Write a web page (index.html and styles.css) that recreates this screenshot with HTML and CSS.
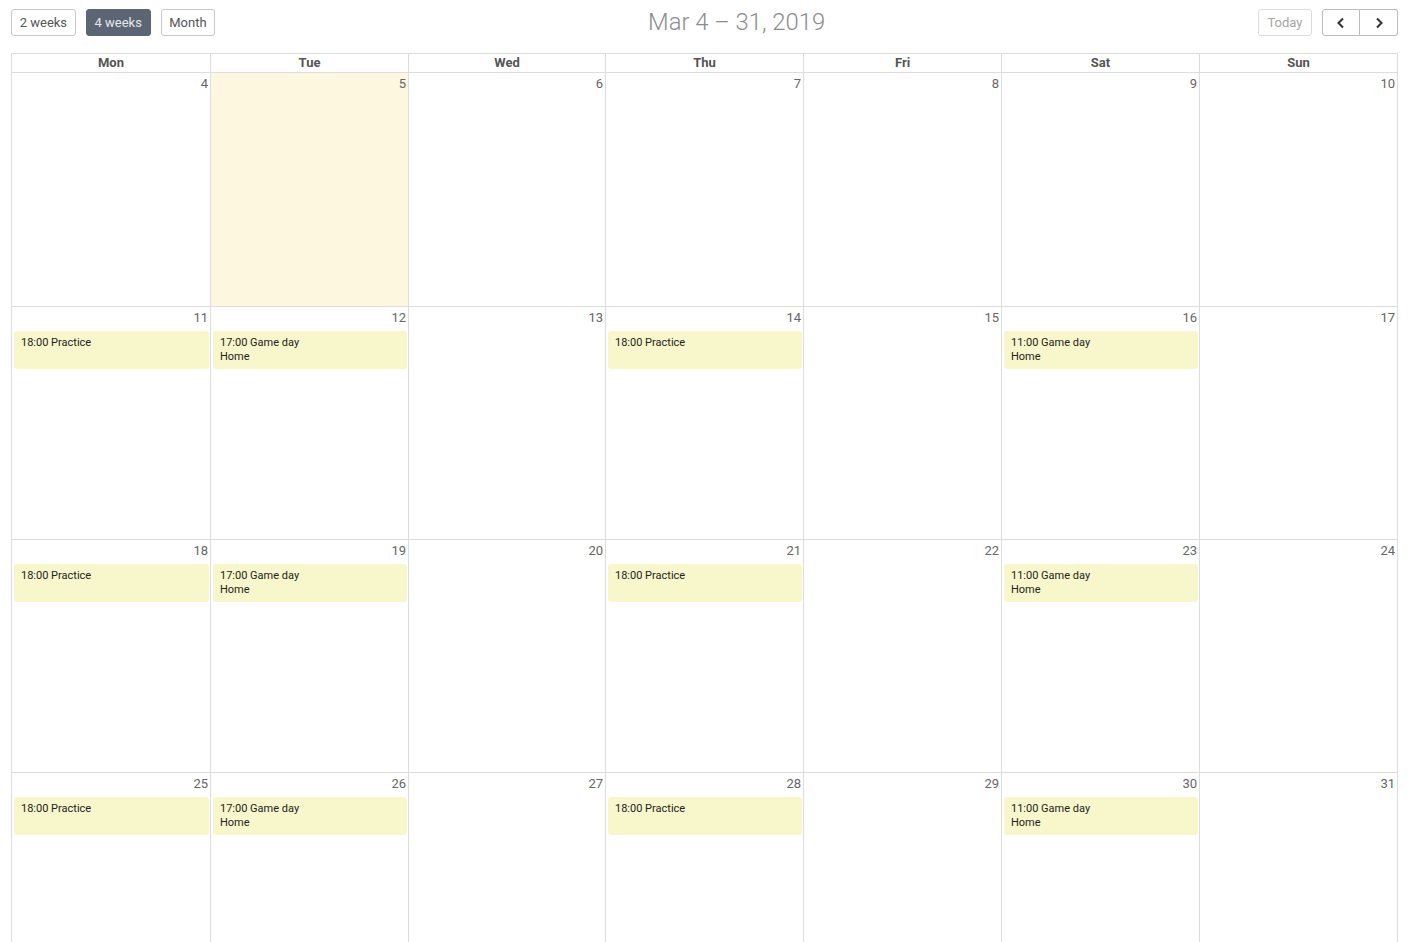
FILE: index.html
```html
<!DOCTYPE html>
<html>
<head>
<meta charset="utf-8">
<link rel="stylesheet" href="styles.css">
</head>
<body>
<div class="page">
  <div class="toolbar">
    <div class="group">
      <button class="btn">2 weeks</button>
      <button class="btn active">4 weeks</button>
      <button class="btn">Month</button>
    </div>
    <h2 class="title">Mar 4 – 31, 2019</h2>
    <div class="group right">
      <button class="btn disabled">Today</button>
      <div class="nav">
        <button class="btn nav-btn"><svg width="10" height="12" viewBox="0 0 10 12"><path d="M7 1.5 L2.5 6 L7 10.5" fill="none" stroke="#333" stroke-width="2"/></svg></button>
        <button class="btn nav-btn"><svg width="10" height="12" viewBox="0 0 10 12"><path d="M3 1.5 L7.5 6 L3 10.5" fill="none" stroke="#333" stroke-width="2"/></svg></button>
      </div>
    </div>
  </div>
  <div class="cal">
    <div class="head">Mon</div><div class="head">Tue</div><div class="head">Wed</div><div class="head">Thu</div><div class="head">Fri</div><div class="head">Sat</div><div class="head">Sun</div>

    <div class="day"><div class="num">4</div></div>
    <div class="day today"><div class="num">5</div></div>
    <div class="day"><div class="num">6</div></div>
    <div class="day"><div class="num">7</div></div>
    <div class="day"><div class="num">8</div></div>
    <div class="day"><div class="num">9</div></div>
    <div class="day"><div class="num">10</div></div>

    <div class="day"><div class="num">11</div><div class="event">18:00 Practice</div></div>
    <div class="day"><div class="num">12</div><div class="event">17:00 Game day<br>Home</div></div>
    <div class="day"><div class="num">13</div></div>
    <div class="day"><div class="num">14</div><div class="event">18:00 Practice</div></div>
    <div class="day"><div class="num">15</div></div>
    <div class="day"><div class="num">16</div><div class="event">11:00 Game day<br>Home</div></div>
    <div class="day"><div class="num">17</div></div>

    <div class="day"><div class="num">18</div><div class="event">18:00 Practice</div></div>
    <div class="day"><div class="num">19</div><div class="event">17:00 Game day<br>Home</div></div>
    <div class="day"><div class="num">20</div></div>
    <div class="day"><div class="num">21</div><div class="event">18:00 Practice</div></div>
    <div class="day"><div class="num">22</div></div>
    <div class="day"><div class="num">23</div><div class="event">11:00 Game day<br>Home</div></div>
    <div class="day"><div class="num">24</div></div>

    <div class="day"><div class="num">25</div><div class="event">18:00 Practice</div></div>
    <div class="day"><div class="num">26</div><div class="event">17:00 Game day<br>Home</div></div>
    <div class="day"><div class="num">27</div></div>
    <div class="day"><div class="num">28</div><div class="event">18:00 Practice</div></div>
    <div class="day"><div class="num">29</div></div>
    <div class="day"><div class="num">30</div><div class="event">11:00 Game day<br>Home</div></div>
    <div class="day"><div class="num">31</div></div>
  </div>
</div>
</body>
</html>
```

FILE: styles.css
```css
* { box-sizing: border-box; }
body {
  margin: 0;
  font-family: Roboto, "Liberation Sans", sans-serif;
  background: #fff;
  color: #333;
}
.page {
  padding: 9px 30px 0 11px;
}
.toolbar {
  display: flex;
  justify-content: space-between;
  align-items: flex-start;
  height: 44px;
}
.group {
  display: flex;
  gap: 10px;
}
.group.right {
  gap: 10px;
}
.btn {
  height: 27px;
  padding: 1px 7.7px 0;
  border: 1px solid #c8c8c8;
  border-radius: 3px;
  background: #fff;
  color: #555;
  font-family: Roboto, "Liberation Sans", sans-serif;
  font-size: 13px;
  line-height: 24px;
  cursor: pointer;
}
.btn.active {
  background: #5c6573;
  border-color: #5c6573;
  color: #e6e8eb;
}
.btn.disabled {
  color: #a6a6a6;
  border-color: #dcdcdc;
  padding: 1px 8.5px 0;
}
.nav {
  display: flex;
}
.nav-btn {
  width: 38px;
  display: flex;
  align-items: center;
  justify-content: center;
  padding: 0;
  border-color: #bbb;
}
.nav-btn:first-child {
  border-radius: 3px 0 0 3px;
}
.nav-btn:last-child {
  border-radius: 0 3px 3px 0;
  border-left: none;
  width: 38px;
}
.title {
  margin: 0;
  font-size: 23.8px;
  font-weight: 300;
  color: #8c8c8c;
  line-height: 26px;
}
.cal {
  display: grid;
  grid-template-columns: 199px 198px 197px 198px 198px 198px 198px;
  grid-template-rows: 19px 234px repeat(3, 233px);
  border-top: 1px solid #ddd;
  border-right: 1px solid #ddd;
  width: 1387px;
}
.head {
  border-left: 1px solid #ddd;
  border-bottom: 1px solid #ddd;
  text-align: center;
  font-size: 13px;
  font-weight: 700;
  color: #555;
  line-height: 18px;
}
.day {
  border-left: 1px solid #ddd;
  border-bottom: 1px solid #ddd;
  padding: 0 1px 0 2px;
}
.day.today {
  background: #fcf7de;
}
.num {
  text-align: right;
  font-size: 13px;
  color: #666;
  line-height: 16px;
  padding: 3px 1px 0 0;
  height: 24px;
}
.event {
  background: #f8f7cc;
  border-radius: 3px;
  height: 38px;
  padding: 5px 7px 4px;
  font-size: 11px;
  line-height: 14px;
  color: #222;
}
```
